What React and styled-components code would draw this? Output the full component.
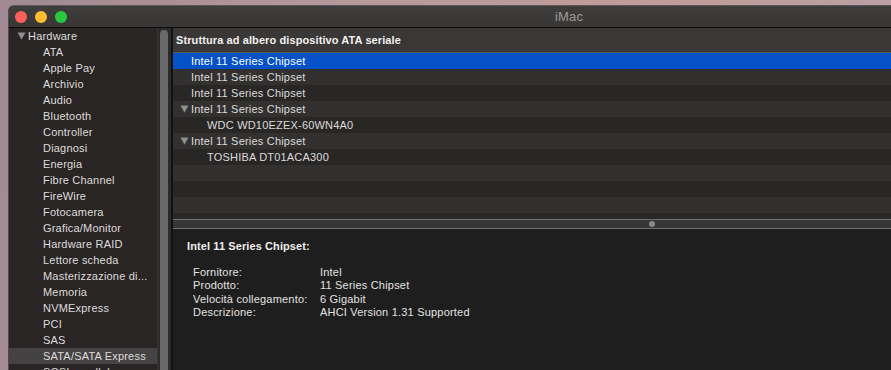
import React from 'react';
import styled, { createGlobalStyle } from 'styled-components';

const sidebarItems = [
	'ATA', 'Apple Pay', 'Archivio', 'Audio', 'Bluetooth', 'Controller', 'Diagnosi', 'Energia',
	'Fibre Channel', 'FireWire', 'Fotocamera', 'Grafica/Monitor', 'Hardware RAID', 'Lettore scheda',
	'Masterizzazione di...', 'Memoria', 'NVMExpress', 'PCI', 'SAS', 'SATA/SATA Express', 'SCSI parallela',
];

const treeRows = [
	{ label: 'Intel 11 Series Chipset', level: 1, selected: true },
	{ label: 'Intel 11 Series Chipset', level: 1 },
	{ label: 'Intel 11 Series Chipset', level: 1 },
	{ label: 'Intel 11 Series Chipset', level: 1, open: true },
	{ label: 'WDC WD10EZEX-60WN4A0', level: 2 },
	{ label: 'Intel 11 Series Chipset', level: 1, open: true },
	{ label: 'TOSHIBA DT01ACA300', level: 2 },
	{}, {}, {}, {},
];

const details = [
	['Fornitore:', 'Intel'],
	['Prodotto:', '11 Series Chipset'],
	['Velocità collegamento:', '6 Gigabit'],
	['Descrizione:', 'AHCI Version 1.31 Supported'],
];

const Disclosure = () => (
	<svg width="9" height="8" viewBox="0 0 9 8">
		<path d="M0.5 0.5 H8.5 L4.5 7.5 Z" fill="#8e8e8e" />
	</svg>
);

const App = () => {
	return (
		<>
			<GlobalStyle />
			<S.Desktop>
				<S.Window>
					<S.TitleBar>
						<S.Lights>
							<S.Light color="#fe5f57" />
							<S.Light color="#febc2e" />
							<S.Light color="#28c840" />
						</S.Lights>
						<S.Title>iMac</S.Title>
					</S.TitleBar>
					<S.Body>
						<S.Sidebar>
							<S.SideRow>
								<S.Toggle><Disclosure /></S.Toggle>
								Hardware
							</S.SideRow>
							{sidebarItems.map(item => (
								<S.SideRow key={item} $child $selected={item === 'SATA/SATA Express'}>{item}</S.SideRow>
							))}
						</S.Sidebar>
						<S.Scroll>
							<S.Thumb />
						</S.Scroll>
						<S.Main>
							<S.Header>Struttura ad albero dispositivo ATA seriale</S.Header>
							<S.Tree>
								{treeRows.map((row, index) => (
									<S.TreeRow key={index} $odd={index % 2 === 1} $selected={row.selected} $level={row.level}>
										{row.open && <S.Toggle $tree><Disclosure /></S.Toggle>}
										{row.label}
									</S.TreeRow>
								))}
							</S.Tree>
							<S.Splitter>
								<S.Grip />
							</S.Splitter>
							<S.Detail>
								<S.DetailTitle>Intel 11 Series Chipset:</S.DetailTitle>
								<S.Props>
									{details.map(([key, value]) => (
										<React.Fragment key={key}>
											<span>{key}</span>
											<span>{value}</span>
										</React.Fragment>
									))}
								</S.Props>
							</S.Detail>
						</S.Main>
					</S.Body>
				</S.Window>
			</S.Desktop>
		</>
	);
};

export default App;

const GlobalStyle = createGlobalStyle`
	* { box-sizing: border-box; }
	body {
		margin: 0;
		font-family: "Liberation Sans", Arial, sans-serif;
		overflow: hidden;
	}
`;

const S = {};

S.Desktop = styled.div`
	width: 891px;
	height: 370px;
	overflow: hidden;
	padding: 5px 0 0 8px;
	background: linear-gradient(100deg, #a08992 0%, #b89a9c 40%, #c29c98 70%, #b7a2a8 100%);
`;

S.Window = styled.div`
	width: 900px;
	height: 380px;
	display: flex;
	flex-direction: column;
	background: #1e1e1e;
	border-top: 1px solid #5c5a59;
	border-left: 1px solid #4e4c4b;
	border-top-left-radius: 6px;
	overflow: hidden;
`;

S.TitleBar = styled.div`
	height: 22px;
	flex: none;
	display: flex;
	align-items: center;
	background: linear-gradient(#403e3d, #393736);
	border-bottom: 1px solid #0c0c0c;
`;

S.Lights = styled.div`
	display: flex;
	gap: 8px;
	padding-left: 6px;
`;

S.Light = styled.span`
	width: 12px;
	height: 12px;
	border-radius: 50%;
	background: ${p => p.color};
`;

S.Title = styled.div`
	margin-left: 488px;
	font-size: 13px;
	color: #9c9a99;
	letter-spacing: 0.2px;
`;

S.Body = styled.div`
	flex: 1;
	display: flex;
	min-height: 0;
	font-size: 11px;
	letter-spacing: 0.2px;
`;

S.Sidebar = styled.div`
	width: 148px;
	flex: none;
	background: #292524;
	overflow: hidden;
`;

S.SideRow = styled.div`
	height: 16px;
	display: flex;
	align-items: center;
	padding-left: ${p => (p.$child ? '34px' : '8px')};
	color: #dedcdb;
	white-space: nowrap;
	background: ${p => (p.$selected ? '#444242' : 'transparent')};
`;

S.Toggle = styled.span`
	display: inline-flex;
	width: 11px;
	margin-left: ${p => (p.$tree ? '-11px' : '0')};
	padding-bottom: 1px;
`;

S.Scroll = styled.div`
	width: 16px;
	flex: none;
	background: #2c2b2b;
	border-left: 1px solid #383736;
	border-right: 2px solid #121212;
	padding: 2px 0 0 2px;
`;

S.Thumb = styled.div`
	width: 8px;
	height: 100%;
	border-radius: 4px 4px 0 0;
	background: #6b6a6a;
`;

S.Main = styled.div`
	flex: 1;
	display: flex;
	flex-direction: column;
	min-width: 0;
`;

S.Header = styled.div`
	height: 25px;
	flex: none;
	display: flex;
	align-items: center;
	padding-left: 3px;
	background: #3a3836;
	border-bottom: 1px solid #5b5958;
	font-weight: bold;
	letter-spacing: 0.1px;
	color: #f2f0ef;
`;

S.Tree = styled.div`
	height: 166px;
	flex: none;
	overflow: hidden;
`;

S.TreeRow = styled.div`
	height: 16px;
	display: flex;
	align-items: center;
	padding-left: ${p => (p.$level === 2 ? '34px' : '18px')};
	color: ${p => (p.$selected ? '#ffffff' : '#dcdad9')};
	background: ${p => (p.$selected ? '#0451c8' : p.$odd ? '#333130' : '#292726')};
	white-space: nowrap;
`;

S.Splitter = styled.div`
	height: 10px;
	flex: none;
	display: flex;
	align-items: center;
	background: #363636;
	border-top: 1px solid #727171;
	border-bottom: 1px solid #727171;
	padding-left: 476px;
`;

S.Grip = styled.span`
	width: 6px;
	height: 6px;
	border-radius: 50%;
	background: #8a8a8a;
`;

S.Detail = styled.div`
	flex: 1;
	background: #1e1e1e;
	padding: 11px 0 0 14px;
	color: #e4e2e1;
`;

S.DetailTitle = styled.div`
	font-weight: bold;
	letter-spacing: 0.1px;
	color: #f0eeed;
	height: 13px;
	line-height: 13px;
	margin-bottom: 13px;
`;

S.Props = styled.div`
	display: grid;
	grid-template-columns: 127px auto;
	justify-content: start;
	line-height: 13.4px;
	padding-left: 6px;
`;
